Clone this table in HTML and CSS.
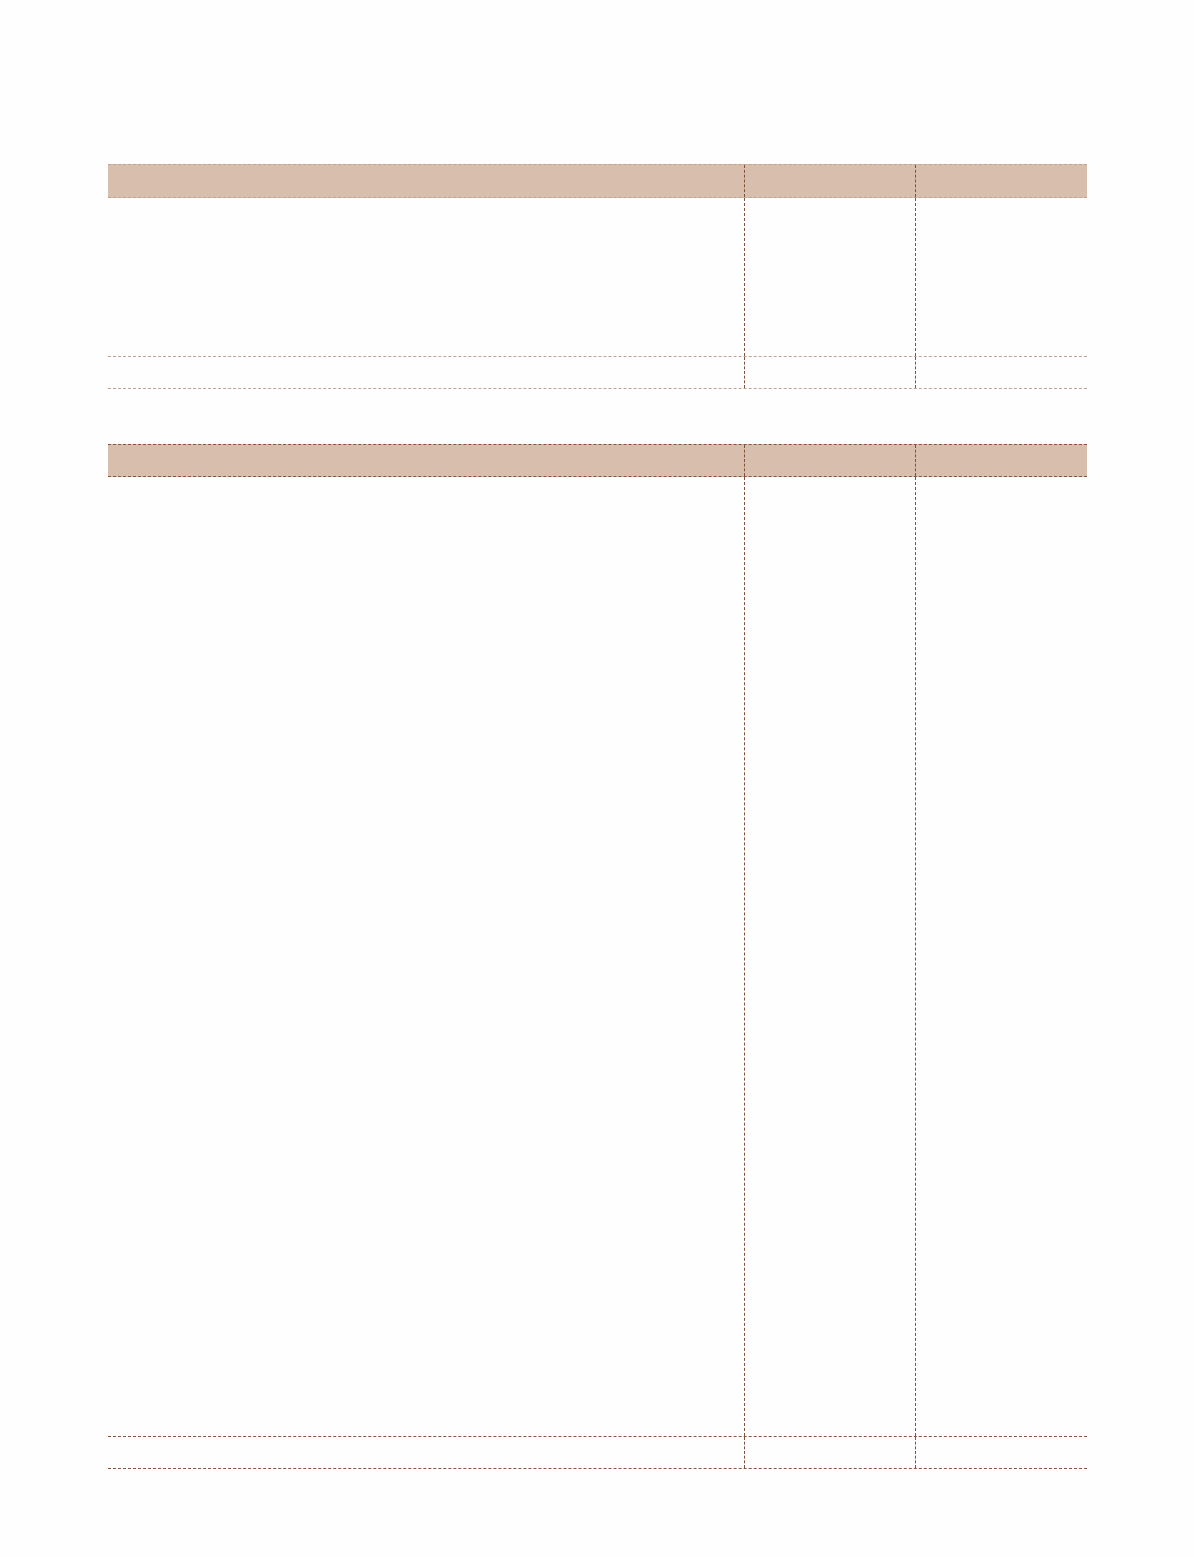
FILE: index.html
```html
<!DOCTYPE html>
<html lang="en">
<head>
<meta charset="utf-8">
<title>Tables</title>
<link rel="stylesheet" href="styles.css">
</head>
<body>
<main class="page">
  <section class="sheet sheet-light">
    <div class="row head"><div class="cell c1"></div><div class="cell c2"></div><div class="cell c3"></div></div>
    <div class="row body body-short"><div class="cell c1"></div><div class="cell c2"></div><div class="cell c3"></div></div>
    <div class="row total"><div class="cell c1"></div><div class="cell c2"></div><div class="cell c3"></div></div>
  </section>
  <section class="sheet sheet-dark">
    <div class="row head"><div class="cell c1"></div><div class="cell c2"></div><div class="cell c3"></div></div>
    <div class="row body body-long"><div class="cell c1"></div><div class="cell c2"></div><div class="cell c3"></div></div>
    <div class="row total"><div class="cell c1"></div><div class="cell c2"></div><div class="cell c3"></div></div>
  </section>
</main>
</body>
</html>
```
FILE: styles.css
```css
html, body {
  margin: 0;
  padding: 0;
  background: #fefefe;
  font-family: "Liberation Sans", Arial, sans-serif;
}
.page {
  padding: 164px 107px 0 108px;
  display: flex;
  flex-direction: column;
  gap: 55px;
}
.sheet {
  width: 979px;
  display: flex;
  flex-direction: column;
}
.row {
  display: grid;
  grid-template-columns: 636px 171px 172px;
}
.cell.c2, .cell.c3 {
  border-left: 1px dashed #80523b;
}
.head {
  background: #d8beac;
  height: 32px;
  border-top: 1px dashed var(--hline);
  border-bottom: 1px dashed var(--hline);
}
.body-short { height: 158px; border-bottom: 1px dashed var(--hline); }
.body-long { height: 959px; border-bottom: 1px dashed var(--hline); }
.total { height: 31px; border-bottom: 1px dashed var(--hline); }
.sheet-light { --hline: #bda595; }
.sheet-dark { --hline: #85553c; }
.sheet-dark .head { height: 31px; }
```
